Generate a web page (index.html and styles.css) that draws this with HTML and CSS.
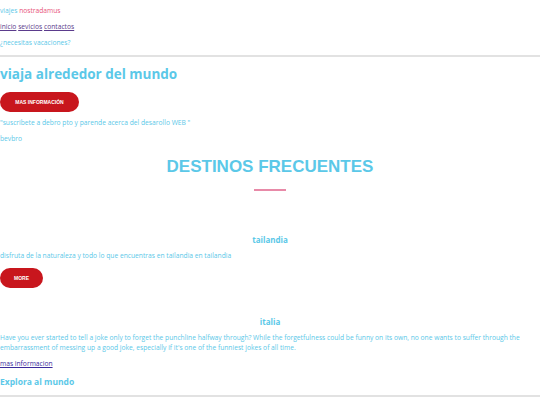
FILE: index.html
```html
<!DOCTYPE html>
<html lang="es">
<head>
<meta charset="utf-8">
<title>viajes nostradamus</title>
<link rel="stylesheet" href="styles.css">
</head>
<body>
<header class="top">
  <p class="brand">viajes <span class="brand-name">nostradamus</span></p>
  <nav class="nav"><a href="#">inicio</a> <a href="#">sevicios</a> <a href="#">contactos</a></nav>
  <p class="ask">¿necesitas vacaciones?</p>
</header>
<section class="hero">
  <h1 class="hero-title">viaja alrededor del mundo</h1>
  <a class="btn btn-wide" href="#">MAS INFORMACIÓN</a>
  <p class="txt">"suscribete a debro pto y parende acerca del desarollo WEB "</p>
  <p class="txt">bevbro</p>
</section>
<section class="dest">
  <h2 class="dest-title">DESTINOS FRECUENTES</h2>
  <div class="divider"></div>
  <article class="place">
    <h3 class="place-title">tailandia</h3>
    <p class="txt">disfruta de la naturaleza y todo lo que encuentras en tailandia en tailandia</p>
    <a class="btn btn-small" href="#">MORE</a>
  </article>
  <article class="place place-2">
    <h3 class="place-title">italia</h3>
    <p class="txt">Have you ever started to tell a joke only to forget the punchline halfway through? While the forgetfulness could be funny on its own, no one wants to suffer through the embarrassment of messing up a good joke, especially if it's one of the funniest jokes of all time.</p>
    <a class="link" href="#">mas informacion</a>
  </article>
</section>
<footer class="foot">
  <h3 class="foot-title">Explora al mundo</h3>
</footer>
</body>
</html>
```
FILE: styles.css
```css
html, body { margin: 0; padding: 0; background: #fff; }
body {
  font-family: "Open Sans", "Noto Sans", sans-serif;
  font-size: 6.7px;
  line-height: 10px;
  color: #5bc8e8;
}
p { margin: 0; }
.top {
  padding-top: 6px;
  border-bottom: 2px solid #e2e2e2;
  padding-bottom: 7px;
}
.brand { margin-bottom: 6px; }
.brand-name { color: #e8557a; }
.nav { margin-bottom: 6px; }
.nav a { color: #5b3b8c; }
.hero { padding-top: 8px; }
.hero-title {
  margin: 0 0 9px;
  font-size: 13.5px;
  line-height: 18px;
  font-weight: 700;
  color: #5bc8e8;
}
.btn {
  display: inline-flex;
  align-items: center;
  justify-content: center;
  background: #c8161d;
  color: #fff;
  font-family: "Liberation Sans", Arial, sans-serif;
  font-weight: 700;
  font-size: 5px;
  text-decoration: none;
  border-radius: 10px;
  height: 20px;
}
.btn-wide { width: 79px; margin-bottom: 6px; }
.btn-small { width: 43px; }
.hero .txt { margin-bottom: 6px; }
.hero .txt:last-child { margin-bottom: 0; }
.dest { text-align: center; }
.dest-title {
  margin: 12px 0 0;
  font-family: "Liberation Sans", Arial, sans-serif;
  font-size: 17px;
  line-height: 22px;
  font-weight: 700;
  color: #5bc8e8;
}
.divider {
  width: 32px;
  height: 2px;
  background: #e88aa8;
  margin: 11px auto 0;
}
.place { text-align: left; }
.place-title {
  text-align: center;
  margin: 43px 0 5px;
  font-size: 8px;
  line-height: 12px;
  font-weight: 700;
}
.place .txt { margin-bottom: 7px; }
.place-2 .place-title { margin-top: 28px; }
.place-2 .txt { margin-bottom: 6px; }
.link { display: inline-block; color: #3b2b9c; }
.foot {
  border-bottom: 2px solid #e2e2e2;
  padding-bottom: 7px;
}
.foot-title {
  margin: 7px 0 0;
  font-size: 8.5px;
  line-height: 12px;
  font-weight: 700;
}
```
